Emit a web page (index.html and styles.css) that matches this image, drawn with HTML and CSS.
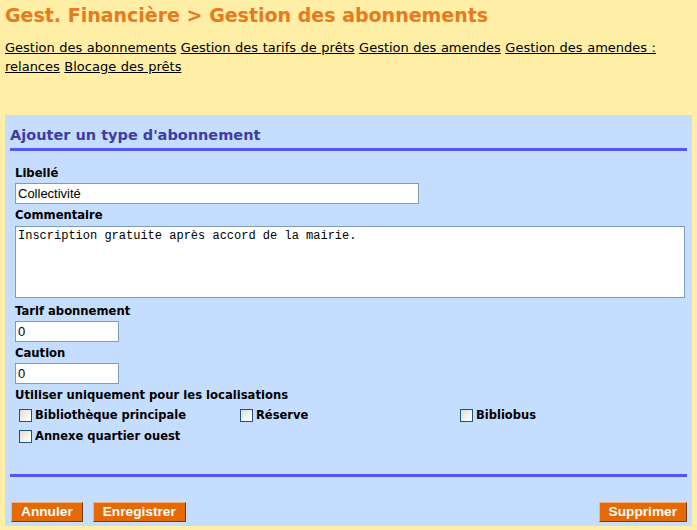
FILE: index.html
```html
<!DOCTYPE html>
<html lang="fr">
<head>
<meta charset="utf-8">
<title>Gestion des abonnements</title>
<link rel="stylesheet" href="styles.css">
</head>
<body>
<h1 class="title">Gest. Financière &gt; Gestion des abonnements</h1>
<nav class="nav">
  <a href="#">Gestion des abonnements</a> <a href="#">Gestion des tarifs de prêts</a> <a href="#">Gestion des amendes</a> <a href="#">Gestion des amendes : relances</a> <a href="#">Blocage des prêts</a>
</nav>
<form class="panel">
  <h2 class="panel-title">Ajouter un type d'abonnement</h2>
  <div class="fields">
    <label class="lbl">Libellé</label>
    <input class="txt txt-wide" type="text" value="Collectivité">
    <label class="lbl">Commentaire</label>
    <textarea class="area">Inscription gratuite après accord de la mairie.</textarea>
    <label class="lbl">Tarif abonnement</label>
    <input class="txt txt-small" type="text" value="0">
    <label class="lbl">Caution</label>
    <input class="txt txt-small" type="text" value="0">
    <label class="lbl">Utiliser uniquement pour les localisations</label>
    <div class="locs">
      <label class="chk"><input type="checkbox"><span>Bibliothèque principale</span></label>
      <label class="chk"><input type="checkbox"><span>Réserve</span></label>
      <label class="chk"><input type="checkbox"><span>Bibliobus</span></label>
      <label class="chk"><input type="checkbox"><span>Annexe quartier ouest</span></label>
    </div>
  </div>
  <div class="actions">
    <div class="left">
      <button type="button" class="btn">Annuler</button>
      <button type="button" class="btn">Enregistrer</button>
    </div>
    <button type="button" class="btn">Supprimer</button>
  </div>
</form>
</body>
</html>
```
FILE: styles.css
```css
html, body {
  margin: 0;
  padding: 0;
}
body {
  background: #ffeea6;
  font-family: "DejaVu Sans", Verdana, sans-serif;
  font-size: 12px;
  color: #000;
  padding: 0 5px;
  height: 530px;
  box-sizing: border-box;
}
.title {
  margin: 0;
  padding-top: 3px;
  font-size: 19px;
  line-height: 24px;
  font-weight: bold;
  color: #e87a1e;
}
.nav {
  margin-top: 11px;
  font-size: 13px;
  line-height: 19px;
  word-spacing: 0.4px;
}
.nav a {
  color: #000;
  text-decoration: underline;
}
.panel {
  margin-top: 39px;
  background: #c5ddfe;
  height: 411px;
  box-sizing: border-box;
  padding: 9px 5px 0 5px;
}
.panel-title {
  margin: 0;
  font-size: 14.5px;
  line-height: 22px;
  font-weight: bold;
  color: #3c3ca8;
  padding-bottom: 2px;
  border-bottom: 3px solid #5555ff;
}
.fields {
  padding: 11px 5px 27px 5px;
  display: flex;
  flex-direction: column;
  align-items: flex-start;
  border-bottom: 3px solid #5555ff;
}
.lbl {
  font-weight: bold;
  font-size: 11.6px;
  line-height: 18px;
  display: block;
  margin-top: 2px;
}
.txt {
  box-sizing: border-box;
  height: 21px;
  border: 1px solid #7f9db9;
  background: #fff;
  font-family: "Liberation Sans", Arial, sans-serif;
  font-size: 13px;
  padding: 0 2px;
  margin: 1px 0 0 0;
}
.txt-wide { width: 404px; }
.txt-small { width: 104px; }
.area {
  box-sizing: border-box;
  width: 670px;
  height: 72px;
  border: 1px solid #7f9db9;
  background: #fff;
  font-family: "Liberation Mono", "Courier New", monospace;
  font-size: 12px;
  padding: 2px 2px;
  margin: 2px 0 2px 0;
  resize: none;
}
.locs {
  display: grid;
  grid-template-columns: 221px 220px 220px;
  grid-auto-rows: 21px;
  margin-top: 1px;
}
.chk {
  display: flex;
  align-items: center;
  font-weight: bold;
  font-size: 11.5px;
  line-height: 17px;
  gap: 3px;
}
.chk input {
  appearance: none;
  -webkit-appearance: none;
  width: 13px;
  height: 13px;
  margin: 0 0 0 4px;
  box-sizing: border-box;
  border: 1px solid #1c5180;
  background: linear-gradient(135deg, #dcdcd7 0%, #f3f3f0 60%, #ffffff 100%);
}
.actions {
  display: flex;
  justify-content: space-between;
  align-items: center;
  margin-top: 25px;
  padding: 0 0 0 1px;
}
.left {
  display: flex;
  gap: 10px;
}
.btn {
  font-family: "Liberation Sans", Arial, sans-serif;
  font-size: 13.7px;
  font-weight: bold;
  color: #fff;
  background: #e36a05;
  border: 1px solid;
  border-color: #f2b27c #7a3a05 #7a3a05 #f2b27c;
  height: 20px;
  padding: 0 9px;
  line-height: 18px;
  cursor: pointer;
}
```
